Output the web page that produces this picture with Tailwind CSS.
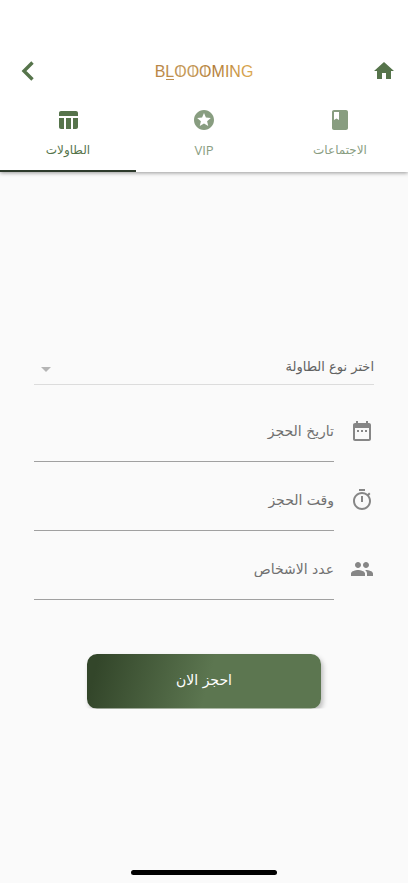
<!DOCTYPE html>
<html lang="ar" dir="rtl">
<head>
<meta charset="utf-8">
<meta name="viewport" content="width=device-width, initial-scale=1">
<title>Blooming</title>
<script src="https://cdn.jsdelivr.net/npm/@tailwindcss/browser@4"></script>
</head>
<body class="flex min-h-screen flex-col bg-[#fafafa] font-['DejaVu_Sans',sans-serif] text-[#707070]">
  <header class="bg-white pt-[43px] shadow-[0_1px_4px_rgba(0,0,0,0.4)]">
    <div class="grid h-14 grid-cols-[1fr_auto_1fr] items-center px-3">
      <a href="#" aria-label="الرئيسية" class="justify-self-start text-[#56744b]">
        <svg class="size-6" viewBox="0 0 24 24" fill="currentColor"><path d="M10 20v-6h4v6h5v-8h3L12 3 2 12h3v8z"/></svg>
      </a>
      <svg class="h-8 w-28" viewBox="0 0 112 32" direction="ltr" role="img" aria-label="BLOOOMING">
        <defs>
          <linearGradient id="gold" gradientUnits="userSpaceOnUse" x1="6" x2="106" y1="0" y2="0">
            <stop offset="0" stop-color="#b78345"/><stop offset=".35" stop-color="#c69a58"/><stop offset=".6" stop-color="#b27c38"/><stop offset="1" stop-color="#dfac55"/>
          </linearGradient>
        </defs>
        <text x="56" y="22" text-anchor="middle" font-family="'Liberation Sans',sans-serif" font-size="16" fill="url(#gold)">BLOOOMING</text>
        <g stroke="url(#gold)" fill="none"><path d="M18 24.500h8.010M32 11v11.010M45 11v11.010M57 11v11.010"/></g>
      </svg>
      <button type="button" aria-label="رجوع" class="justify-self-end px-1 text-[#56744b]">
        <svg class="size-6" viewBox="0 0 24 24" fill="none" stroke="currentColor" stroke-width="3.400"><path d="M16.500 3.500 8 12l8.500 8.500"/></svg>
      </button>
    </div>
    <nav class="grid h-[73px] grid-cols-3 text-[12px] leading-5 text-[#56744b]">
      <a href="#" class="flex flex-col items-center gap-2 border-b-2 border-transparent pt-[9px] opacity-70">
        <svg class="size-6" viewBox="0 0 24 24" fill="currentColor"><path fill-rule="evenodd" d="M18 2H6c-1.100 0-2 .9-2 2v16c0 1.100.9 2 2 2h12c1.100 0 2-.9 2-2V4c0-1.100-.9-2-2-2zM6 4h5v8l-2.500-1.500L6 12V4z"/></svg>
        <span>الاجتماعات</span>
      </a>
      <a href="#" class="flex flex-col items-center gap-2 border-b-2 border-transparent pt-[9px] opacity-70">
        <svg class="size-6" viewBox="0 0 24 24" fill="currentColor"><path d="M11.990 2C6.470 2 2 6.480 2 12s4.470 10 9.990 10C17.520 22 22 17.520 22 12S17.520 2 11.990 2zm4.240 16L12 15.450 7.770 18l1.120-4.810-3.730-3.230 4.920-.42L12 5l1.920 4.530 4.920.42-3.730 3.230L16.230 18z"/></svg>
        <span class="font-['Open_Sans',sans-serif] text-[13px]">VIP</span>
      </a>
      <a href="#" aria-current="page" class="flex flex-col items-center gap-2 border-b-2 border-[#2d3a2b] pt-[9px]">
        <svg class="size-6" viewBox="0 0 24 24" fill="currentColor"><path d="M10 10.020h5V21h-5zM17 21h3c1.100 0 2-.9 2-2v-9h-5v11zm3-18H5c-1.100 0-2 .9-2 2v3h19V5c0-1.100-.9-2-2-2zM3 19c0 1.100.9 2 2 2h3V10H3v9z"/></svg>
        <span>الطاولات</span>
      </a>
    </nav>
  </header>

  <main class="flex flex-1 flex-col justify-center pb-[2px]">
    <form class="flex flex-col px-[34px] text-[14px]">
      <div class="relative">
        <select aria-label="نوع الطاولة" class="h-10 w-full appearance-none border-b border-[#dcdcdc] bg-transparent pt-[6px] text-[13px] text-[#626262] outline-none">
          <option>اختر نوع الطاولة</option>
        </select>
        <svg class="pointer-events-none absolute top-3 left-0 size-6" viewBox="0 0 24 24" fill="#b5b5b5"><path d="m7 10 5 5 5-5z"/></svg>
      </div>
      <div class="mt-2 flex h-[69px] items-center gap-4">
        <label for="date" class="pt-2 text-[#868686]"><svg class="size-6" viewBox="0 0 24 24" fill="currentColor" role="img" aria-label="تاريخ"><path d="M9 11H7v2h2v-2zm4 0h-2v2h2v-2zm4 0h-2v2h2v-2zm2-7h-1V2h-2v2H8V2H6v2H5c-1.110 0-1.990.9-1.990 2L3 20c0 1.100.89 2 2 2h14c1.100 0 2-.9 2-2V6c0-1.100-.9-2-2-2zm0 16H5V9h14v11z"/></svg></label>
        <input id="date" type="text" placeholder="تاريخ الحجز" class="h-full min-w-0 flex-1 border-b border-[#a0a0a0] pt-2 outline-none placeholder:text-[#707070]">
      </div>
      <div class="flex h-[69px] items-center gap-4">
        <label for="time" class="pt-2 text-[#868686]"><svg class="size-6" viewBox="0 0 24 24" fill="currentColor" role="img" aria-label="وقت"><path d="M15 1H9v2h6V1zm-4 13h2V8h-2v6zm8.030-6.610 1.420-1.420c-.43-.51-.9-.99-1.410-1.410l-1.420 1.420C16.070 4.740 14.120 4 12 4c-4.970 0-9 4.030-9 9s4.020 9 9 9 9-4.030 9-9c0-2.120-.74-4.070-1.970-5.610zM12 20c-3.870 0-7-3.130-7-7s3.130-7 7-7 7 3.130 7 7-3.130 7-7 7z"/></svg></label>
        <input id="time" type="text" placeholder="وقت الحجز" class="h-full min-w-0 flex-1 border-b border-[#a0a0a0] pt-2 outline-none placeholder:text-[#707070]">
      </div>
      <div class="flex h-[69px] items-center gap-4">
        <label for="guests" class="pt-2 text-[#868686]"><svg class="size-6" viewBox="0 0 24 24" fill="currentColor" role="img" aria-label="أشخاص"><path d="M16 11c1.660 0 2.990-1.340 2.990-3S17.660 5 16 5s-3 1.340-3 3 1.340 3 3 3zm-8 0c1.660 0 2.990-1.340 2.990-3S9.660 5 8 5 5 6.340 5 8s1.340 3 3 3zm0 2c-2.330 0-7 1.170-7 3.500V19h14v-2.500c0-2.330-4.670-3.500-7-3.500zm8 0c-.29 0-.62.020-.97.050 1.160.84 1.970 1.970 1.970 3.450V19h6v-2.500c0-2.330-4.670-3.500-7-3.500z"/></svg></label>
        <input id="guests" type="text" placeholder="عدد الاشخاص" class="h-full min-w-0 flex-1 border-b border-[#a0a0a0] pt-2 outline-none placeholder:text-[#707070]">
      </div>
      <button type="submit" class="mx-[53px] mt-[54px] h-[55px] rounded-[10px] bg-[linear-gradient(105deg,#33462a_5%,#5c7650_52%)] pb-[2px] text-white shadow-[2px_3px_5px_rgba(0,0,0,0.25)] [clip-path:inset(-8px_-10px_0_-8px)]">احجز الان</button>
    </form>
  </main>
  <div class="fixed bottom-2 left-1/2 h-[5px] w-[146px] -translate-x-1/2 rounded-full bg-black"></div>
</body>
</html>
